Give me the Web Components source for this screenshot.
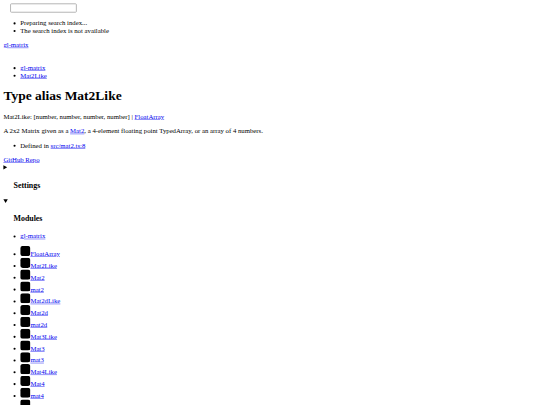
<!DOCTYPE html>
<html lang="en">
<meta charset="UTF-8">
<title>Mat2Like | gl-matrix</title>
<style>
  html { overflow: hidden; }
  body { margin: 0; font-family: "Liberation Serif", serif; }
</style>

<doc-page>
  <doc-toolbar></doc-toolbar>
  <doc-title heading="Type alias Mat2Like"></doc-title>
  <doc-body></doc-body>
  <doc-nav></doc-nav>
</doc-page>

<script>
  function shadow(el, html) {
    el.attachShadow({mode: 'open'}).innerHTML = html;
  }

  // the reference is an unstyled 1280 wide doc page, shrunk to the 540 window
  class DocPage extends HTMLElement {
    connectedCallback() {
      shadow(this, `
        <style>
          :host {
            display: block;
            width: 540px;
            height: 405px;
            overflow: hidden;
          }
          .sheet {
            box-sizing: border-box;
            width: 1280px;
            height: 960px;
            padding: 8px;
            overflow: hidden;
            transform: scale(0.421875);
            transform-origin: 0 0;
          }
        </style>
        <div class="sheet"><slot></slot></div>`);
    }
  }

  class DocToolbar extends HTMLElement {
    connectedCallback() {
      shadow(this, `
        <style>
          :host { display: block; }
          .field { display: flex; align-items: center; }
          .icon { width: 16px; height: 16px; flex: none; }
          input { box-sizing: border-box; width: 158px; height: 22px; border: 2px solid #a9a9a9; border-radius: 3px; background: #fff; }
          ul { margin: 16px 0; }
          .menu { height: 20px; }
        </style>
        <div class="field">
          <span class="icon"></span>
          <input type="text" aria-label="Search">
        </div>
        <ul>
          <li>Preparing search index...</li>
          <li>The search index is not available</li>
        </ul>
        <a href="#">gl-matrix</a>
        <div class="menu"></div>`);
    }
  }

  class DocTitle extends HTMLElement {
    connectedCallback() {
      shadow(this, `
        <style>
          :host { display: block; }
          ul { margin: 16px 0; }
          h1 { margin: 21.44px 0; }
        </style>
        <ul>
          <li><a href="#">gl-matrix</a></li>
          <li><a href="#">Mat2Like</a></li>
        </ul>
        <h1>${this.getAttribute('heading')}</h1>`);
    }
  }

  class DocBody extends HTMLElement {
    connectedCallback() {
      shadow(this, `
        <style>
          :host { display: block; }
          p { margin: 16px 0; }
          ul { margin: 16px 0; }
        </style>
        <div>Mat2Like: [number, number, number, number] | <a href="#">FloatArray</a></div>
        <p>A 2x2 Matrix given as a <a href="#">Mat2</a>, a 4-element floating point TypedArray, or an array of 4 numbers.</p>
        <ul>
          <li>Defined in <a href="#">src/mat2.ts:8</a></li>
        </ul>`);
    }
  }

  class DocSection extends HTMLElement {
    connectedCallback() {
      shadow(this, `
        <style>
          :host { display: block; }
          h3 { margin: 18.72px 0; }
          .chevron { display: inline-block; width: 24px; height: 20px; vertical-align: baseline; }
        </style>
        <details ${this.hasAttribute('open') ? 'open' : ''}>
          <summary><h3><span class="chevron"></span>${this.getAttribute('label')}</h3></summary>
          <slot></slot>
        </details>`);
    }
  }

  class DocKind extends HTMLElement {
    connectedCallback() {
      shadow(this, `
        <style>
          :host { display: list-item; }
          svg { display: inline; vertical-align: baseline; }
        </style>
        <svg width="24" height="24" viewBox="0 0 24 24"><rect width="24" height="24" rx="6" fill="#000"/></svg><a href="#"><slot></slot></a>`);
    }
  }

  class DocNav extends HTMLElement {
    connectedCallback() {
      const kinds = ['FloatArray', 'Mat2Like', 'Mat2', 'mat2', 'Mat2dLike', 'Mat2d', 'mat2d',
        'Mat3Like', 'Mat3', 'mat3', 'Mat4Like', 'Mat4', 'mat4', 'Quat'];
      shadow(this, `
        <style>
          :host { display: block; }
          ul { margin: 16px 0; }
          .first { margin: 21.44px 0 14px; }
          .kinds { margin-top: 14px; }
        </style>
        <a href="#">GitHub Repo</a>
        <doc-section label="Settings"></doc-section>
        <doc-section label="Modules" open>
          <ul class="first"><li><a href="#">gl-matrix</a></li></ul>
          <ul class="kinds">${kinds.map(k => `<doc-kind>${k}</doc-kind>`).join('')}</ul>
        </doc-section>`);
    }
  }

  customElements.define('doc-page', DocPage);
  customElements.define('doc-toolbar', DocToolbar);
  customElements.define('doc-title', DocTitle);
  customElements.define('doc-body', DocBody);
  customElements.define('doc-section', DocSection);
  customElements.define('doc-kind', DocKind);
  customElements.define('doc-nav', DocNav);
</script>
</html>
